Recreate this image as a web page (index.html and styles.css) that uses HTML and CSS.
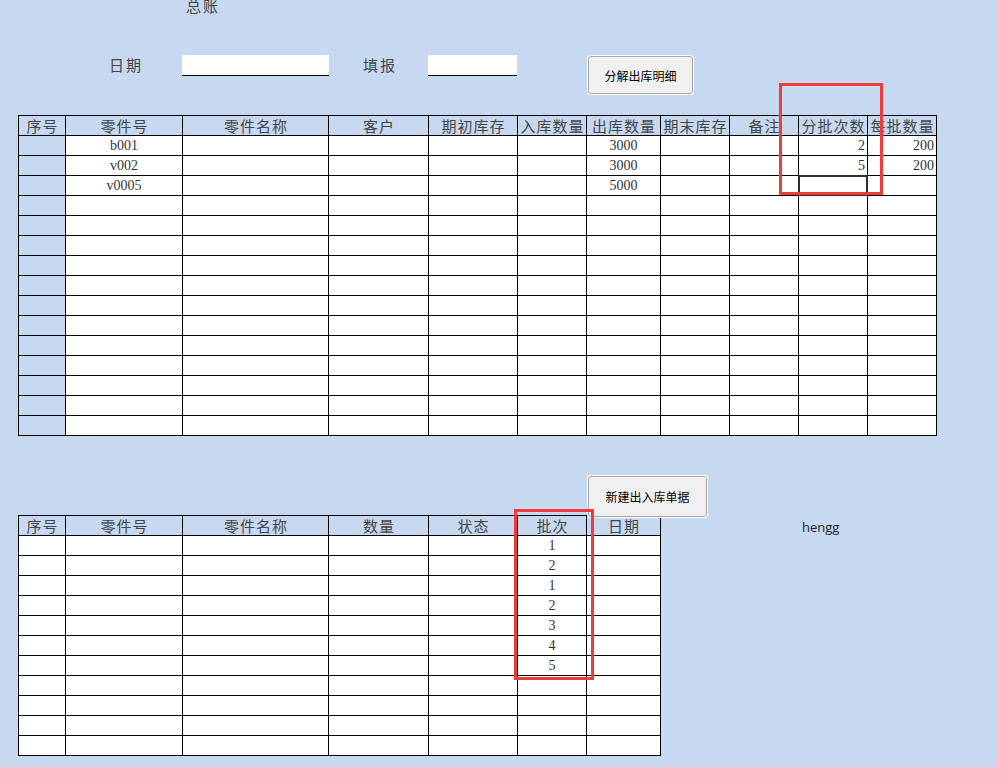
FILE: index.html
```html
<!DOCTYPE html>
<html lang="zh">
<head>
<meta charset="utf-8">
<title>总账</title>
<link rel="stylesheet" href="styles.css">
</head>
<body>
<div class="sheet">
  <div class="title">总账</div>

  <div class="form">
    <span class="lbl lbl-date">日期</span>
    <span class="field field-date"></span>
    <span class="lbl lbl-fill">填报</span>
    <span class="field field-fill"></span>
    <button class="btn btn-split">分解出库明细</button>
  </div>

  <div class="grid grid-top">
    <div class="h">序号</div><div class="h">零件号</div><div class="h">零件名称</div><div class="h">客户</div><div class="h">期初库存</div><div class="h">入库数量</div><div class="h">出库数量</div><div class="h">期末库存</div><div class="h">备注</div><div class="h">分批次数</div><div class="h">每批数量</div>

    <div class="c b"></div><div class="c">b001</div><div class="c"></div><div class="c"></div><div class="c"></div><div class="c"></div><div class="c">3000</div><div class="c"></div><div class="c"></div><div class="c r">2</div><div class="c r">200</div>
    <div class="c b"></div><div class="c">v002</div><div class="c"></div><div class="c"></div><div class="c"></div><div class="c"></div><div class="c">3000</div><div class="c"></div><div class="c"></div><div class="c r">5</div><div class="c r">200</div>
    <div class="c b"></div><div class="c">v0005</div><div class="c"></div><div class="c"></div><div class="c"></div><div class="c"></div><div class="c">5000</div><div class="c"></div><div class="c"></div><div class="c sel"></div><div class="c"></div>
    <div class="c b"></div><div class="c"></div><div class="c"></div><div class="c"></div><div class="c"></div><div class="c"></div><div class="c"></div><div class="c"></div><div class="c"></div><div class="c"></div><div class="c"></div>
    <div class="c b"></div><div class="c"></div><div class="c"></div><div class="c"></div><div class="c"></div><div class="c"></div><div class="c"></div><div class="c"></div><div class="c"></div><div class="c"></div><div class="c"></div>
    <div class="c b"></div><div class="c"></div><div class="c"></div><div class="c"></div><div class="c"></div><div class="c"></div><div class="c"></div><div class="c"></div><div class="c"></div><div class="c"></div><div class="c"></div>
    <div class="c b"></div><div class="c"></div><div class="c"></div><div class="c"></div><div class="c"></div><div class="c"></div><div class="c"></div><div class="c"></div><div class="c"></div><div class="c"></div><div class="c"></div>
    <div class="c b"></div><div class="c"></div><div class="c"></div><div class="c"></div><div class="c"></div><div class="c"></div><div class="c"></div><div class="c"></div><div class="c"></div><div class="c"></div><div class="c"></div>
    <div class="c b"></div><div class="c"></div><div class="c"></div><div class="c"></div><div class="c"></div><div class="c"></div><div class="c"></div><div class="c"></div><div class="c"></div><div class="c"></div><div class="c"></div>
    <div class="c b"></div><div class="c"></div><div class="c"></div><div class="c"></div><div class="c"></div><div class="c"></div><div class="c"></div><div class="c"></div><div class="c"></div><div class="c"></div><div class="c"></div>
    <div class="c b"></div><div class="c"></div><div class="c"></div><div class="c"></div><div class="c"></div><div class="c"></div><div class="c"></div><div class="c"></div><div class="c"></div><div class="c"></div><div class="c"></div>
    <div class="c b"></div><div class="c"></div><div class="c"></div><div class="c"></div><div class="c"></div><div class="c"></div><div class="c"></div><div class="c"></div><div class="c"></div><div class="c"></div><div class="c"></div>
    <div class="c b"></div><div class="c"></div><div class="c"></div><div class="c"></div><div class="c"></div><div class="c"></div><div class="c"></div><div class="c"></div><div class="c"></div><div class="c"></div><div class="c"></div>
    <div class="c b"></div><div class="c"></div><div class="c"></div><div class="c"></div><div class="c"></div><div class="c"></div><div class="c"></div><div class="c"></div><div class="c"></div><div class="c"></div><div class="c"></div>
    <div class="c b"></div><div class="c"></div><div class="c"></div><div class="c"></div><div class="c"></div><div class="c"></div><div class="c"></div><div class="c"></div><div class="c"></div><div class="c"></div><div class="c"></div>
  </div>

  <div class="lower">
    <div class="grid grid-bottom">
      <div class="h">序号</div><div class="h">零件号</div><div class="h">零件名称</div><div class="h">数量</div><div class="h">状态</div><div class="h">批次</div><div class="h">日期</div>

      <div class="c"></div><div class="c"></div><div class="c"></div><div class="c"></div><div class="c"></div><div class="c">1</div><div class="c"></div>
      <div class="c"></div><div class="c"></div><div class="c"></div><div class="c"></div><div class="c"></div><div class="c">2</div><div class="c"></div>
      <div class="c"></div><div class="c"></div><div class="c"></div><div class="c"></div><div class="c"></div><div class="c">1</div><div class="c"></div>
      <div class="c"></div><div class="c"></div><div class="c"></div><div class="c"></div><div class="c"></div><div class="c">2</div><div class="c"></div>
      <div class="c"></div><div class="c"></div><div class="c"></div><div class="c"></div><div class="c"></div><div class="c">3</div><div class="c"></div>
      <div class="c"></div><div class="c"></div><div class="c"></div><div class="c"></div><div class="c"></div><div class="c">4</div><div class="c"></div>
      <div class="c"></div><div class="c"></div><div class="c"></div><div class="c"></div><div class="c"></div><div class="c">5</div><div class="c"></div>
      <div class="c"></div><div class="c"></div><div class="c"></div><div class="c"></div><div class="c"></div><div class="c"></div><div class="c"></div>
      <div class="c"></div><div class="c"></div><div class="c"></div><div class="c"></div><div class="c"></div><div class="c"></div><div class="c"></div>
      <div class="c"></div><div class="c"></div><div class="c"></div><div class="c"></div><div class="c"></div><div class="c"></div><div class="c"></div>
      <div class="c"></div><div class="c"></div><div class="c"></div><div class="c"></div><div class="c"></div><div class="c"></div><div class="c"></div>
    </div>
    <div class="note">hengg</div>
    <button class="btn btn-new">新建出入库单据</button>
  </div>

  <div class="mark mark-top"></div>
  <div class="mark mark-bottom"></div>
</div>
</body>
</html>
```
FILE: styles.css
```css
* { box-sizing: border-box; }

body {
  margin: 0;
  background: #c6d9f1;
  font-family: "Noto Sans CJK SC", sans-serif;
  color: #333;
}

.sheet {
  position: relative;
  width: 998px;
  height: 767px;
  overflow: hidden;
}

.title {
  height: 20px;
  margin-top: -4px;
  padding-left: 186px;
  font-size: 15px;
  line-height: 20px;
  letter-spacing: 2px;
  color: #444;
}

.form {
  display: flex;
  align-items: flex-start;
  height: 40px;
  margin-top: 39px;
  padding-left: 109px;
}

.lbl {
  font-size: 15px;
  line-height: 20px;
  letter-spacing: 2px;
  color: #444;
}
.lbl-date { width: 73px; }
.lbl-fill { width: 65px; }

.field {
  height: 21px;
  background: #fff;
  border-bottom: 1px solid #000;
}
.field-date { width: 147px; margin-right: 34px; }
.field-fill { width: 89px; margin-right: 70px; }

.btn {
  margin: 0;
  padding: 0;
  background: #f0f0f0;
  border: 1px solid #a8a8a8;
  border-radius: 3px;
  box-shadow: 0 0 0 1px #fff;
  font-family: "Noto Sans CJK SC", sans-serif;
  font-size: 12px;
  font-weight: normal;
  color: #000;
}
.btn-split {
  width: 105px;
  height: 38px;
  margin: 1px;
}
.btn-new {
  position: absolute;
  left: 588px;
  top: -39px;
  width: 119px;
  height: 41px;
}

.grid {
  display: grid;
  gap: 1px;
  width: max-content;
  margin-left: 18px;
  background: #000;
  border: 1px solid #000;
  grid-auto-rows: 19px;
}
.grid-top {
  margin-top: 20px;
  grid-template-columns: 46px 116px 145px 99px 88px 68px 73px 68px 68px 68px 68px;
}
.grid-bottom {
  grid-template-columns: 46px 116px 145px 99px 88px 68px 73px;
}

.h {
  background: #c6d9f1;
  font-size: 15px;
  line-height: 19px;
  letter-spacing: 1px;
  padding-left: 1px;
  text-align: center;
  white-space: nowrap;
  color: #444;
}

.c {
  background: #fff;
  font-family: "Liberation Serif", serif;
  font-size: 14px;
  line-height: 19px;
  text-align: center;
  color: #333;
}
.c.b { background: #c6d9f1; }
.c.r { text-align: right; padding-right: 2px; }
.c.sel { position: relative; }
.c.sel::after {
  content: "";
  position: absolute;
  top: -1px;
  left: -1px;
  right: -1px;
  bottom: -1px;
  border: 2px solid #2f2f2f;
}

.lower {
  position: relative;
  display: flex;
  align-items: flex-start;
  margin-top: 79px;
}

.note {
  margin-left: 141px;
  padding-top: 2px;
  font-family: "Open Sans", sans-serif;
  font-size: 13px;
  line-height: 20px;
  color: #222;
}

.mark {
  position: absolute;
  border: 3px solid #ef3b3b;
}
.mark-top { left: 779px; top: 83px; width: 104px; height: 112px; }
.mark-bottom { left: 514px; top: 509px; width: 80px; height: 171px; }
```
